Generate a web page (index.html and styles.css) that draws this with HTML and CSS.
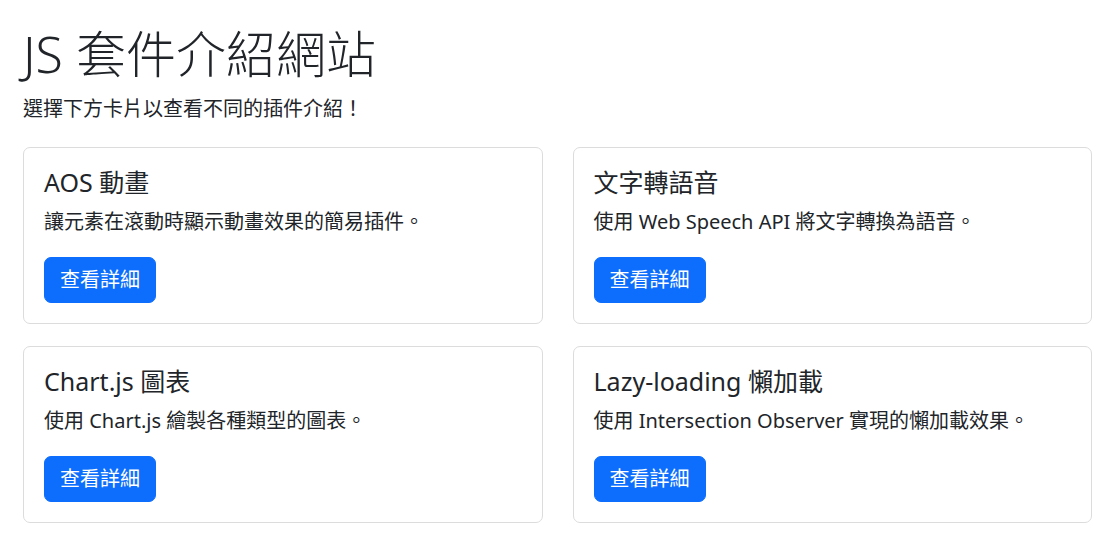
FILE: index.html
```html
<!DOCTYPE html>
<html lang="zh-Hant">
<head>
<meta charset="utf-8">
<title>JS 套件介紹網站</title>
<link rel="stylesheet" href="styles.css">
</head>
<body>
<main class="page">
  <h1 class="page-title">JS 套件介紹網站</h1>
  <p class="lead-text">選擇下方卡片以查看不同的插件介紹！</p>
  <section class="card-grid">
    <article class="card">
      <h5 class="card-title">AOS 動畫</h5>
      <p class="card-text">讓元素在滾動時顯示動畫效果的簡易插件。</p>
      <a class="btn" href="#">查看詳細</a>
    </article>
    <article class="card">
      <h5 class="card-title">文字轉語音</h5>
      <p class="card-text">使用 Web Speech API 將文字轉換為語音。</p>
      <a class="btn" href="#">查看詳細</a>
    </article>
    <article class="card">
      <h5 class="card-title">Chart.js 圖表</h5>
      <p class="card-text">使用 Chart.js 繪製各種類型的圖表。</p>
      <a class="btn" href="#">查看詳細</a>
    </article>
    <article class="card">
      <h5 class="card-title">Lazy-loading 懶加載</h5>
      <p class="card-text">使用 Intersection Observer 實現的懶加載效果。</p>
      <a class="btn" href="#">查看詳細</a>
    </article>
  </section>
</main>
</body>
</html>
```

FILE: styles.css
```css
* { box-sizing: border-box; }

html, body {
  margin: 0;
  padding: 0;
  background: #ffffff;
}

body {
  font-family: "Noto Sans", "Noto Sans CJK TC", sans-serif;
  font-size: 20px;
  font-weight: 400;
  line-height: 1.5;
  color: #212529;
}

.page {
  padding: 24px 14px 0 23px;
}

.page-title {
  margin: 0 0 10px;
  font-size: 50px;
  font-weight: 300;
  line-height: 1.2;
}

.lead-text {
  margin: 0 0 23px;
  font-size: 20px;
  line-height: 30px;
}

.card-grid {
  display: grid;
  grid-template-columns: 1fr 1fr;
  column-gap: 30px;
  row-gap: 22px;
}

.card {
  border: 1px solid #dcdcdd;
  border-radius: 7px;
  padding: 19px 20px 20px;
  background: #fff;
}

.card-title {
  margin: 0 0 10px;
  font-size: 25px;
  font-weight: 400;
  line-height: 30px;
}

.card-text {
  margin: 0 0 21px;
  line-height: 29px;
}

.btn {
  display: inline-block;
  padding: 7px 15px;
  border: 1px solid #0d6efd;
  border-radius: 7px;
  background: #0d6efd;
  color: #fff;
  font-size: 20px;
  line-height: 30px;
  text-decoration: none;
}
```
